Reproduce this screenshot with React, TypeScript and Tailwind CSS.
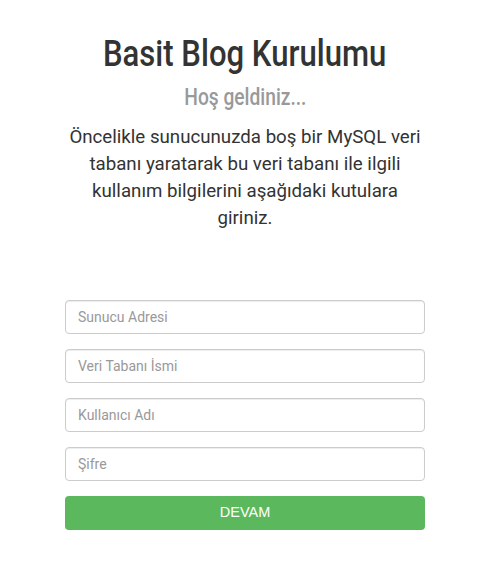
export default function App() {
  const fields = ["Sunucu Adresi", "Veri Tabanı İsmi", "Kullanıcı Adı", "Şifre"];
  return (
    <div className="min-h-[567px] w-full bg-white font-['Roboto',sans-serif]">
      <div className="w-[490px] flex flex-col items-center pt-[29px]">
        <h1 className="scale-x-[0.84] text-[37px] font-medium leading-[50px] text-[#333333] whitespace-nowrap">
          Basit Blog Kurulumu
        </h1>
        <h2 className="mt-[3px] scale-x-[0.8] text-[24px] font-medium leading-[30px] text-[#999999] whitespace-nowrap">
          Hoş geldiniz...
        </h2>
        <p className="mt-[12px] w-[360px] text-center text-[18.7px] leading-[27px] text-[#333333]">
          Öncelikle sunucunuzda boş bir MySQL veri tabanı yaratarak bu veri tabanı ile ilgili kullanım bilgilerini aşağıdaki kutulara giriniz.
        </p>
        <form className="mt-[68px] w-[360px] flex flex-col gap-[15px]">
          {fields.map((f) => (
            <input
              key={f}
              placeholder={f}
              className="h-[34px] w-full rounded-[4px] border border-[#cccccc] bg-white px-[12px] text-[14px] text-[#555555] placeholder:text-[#999999] shadow-[inset_0_1px_1px_rgba(0,0,0,0.075)] outline-none"
            />
          ))}
          <button
            type="button"
            className="h-[34px] w-full rounded-[4px] bg-[#5cb85c] font-['Liberation_Sans',Arial,sans-serif] text-[14.5px] text-white"
          >
            DEVAM
          </button>
        </form>
      </div>
    </div>
  );
}
